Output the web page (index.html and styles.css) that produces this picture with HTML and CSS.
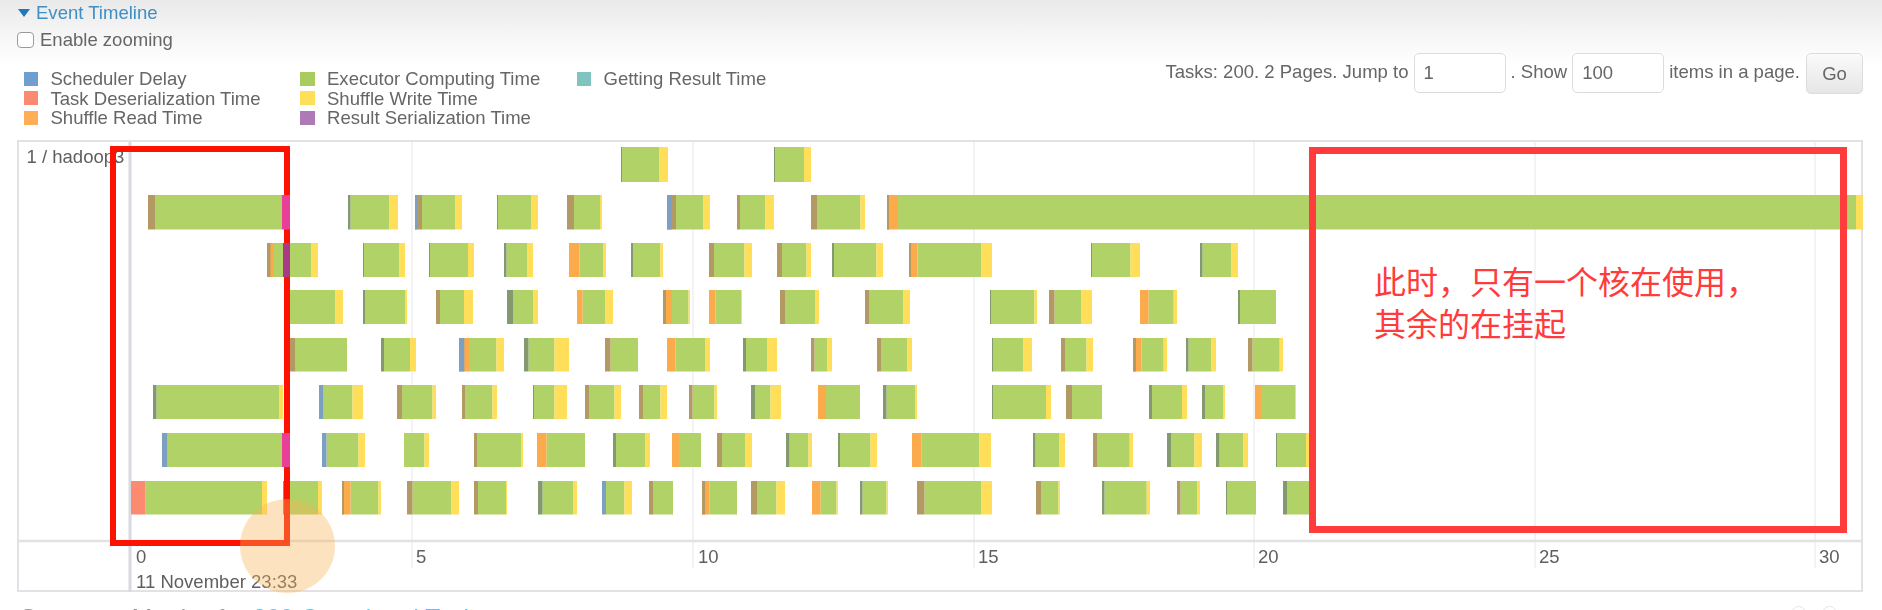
FILE: index.html
```html
<!DOCTYPE html>
<html lang="en">
<head>
<meta charset="utf-8">
<title>Event Timeline</title>
<link rel="stylesheet" href="styles.css">
</head>
<body>
<div class="page">
  <div class="soft">
    <div class="toggle"><span class="arrow"></span><a class="toggle-link">Event Timeline</a></div>
    <label class="zoom-row"><input class="zoom-check" type="checkbox"><span>Enable zooming</span></label>
    <div class="controls">
      <div class="legend">
        <div class="legend-item"><i class="swatch sw-delay"></i>Scheduler Delay</div>
        <div class="legend-item"><i class="swatch sw-deser"></i>Task Deserialization Time</div>
        <div class="legend-item"><i class="swatch sw-read"></i>Shuffle Read Time</div>
        <div class="legend-item"><i class="swatch sw-exec"></i>Executor Computing Time</div>
        <div class="legend-item"><i class="swatch sw-write"></i>Shuffle Write Time</div>
        <div class="legend-item"><i class="swatch sw-ser"></i>Result Serialization Time</div>
        <div class="legend-item"><i class="swatch sw-get"></i>Getting Result Time</div>
      </div>
      <form class="pager">
        <span>Tasks: 200. 2 Pages. Jump to</span>
        <input class="pager-input" type="text" value="1">
        <span>. Show</span>
        <input class="pager-input" type="text" value="100">
        <span>items in a page.</span>
        <button class="go" type="button">Go</button>
      </form>
    </div>
  </div>
  <div class="chart">
    <svg id="timeline" class="timeline" viewBox="19 142 1842 448" width="1842" height="448"></svg>
  </div>
  <div class="foot soft">
    <h4 class="foot-title">Summary Metrics for <a class="foot-link">200 Completed Tasks</a></h4>
    <div class="foot-icons"><i class="dot"></i><i class="dot"></i></div>
  </div>
  <div class="note">此时，只有一个核在使用，<br>其余的在挂起</div>
</div>
<script src="app.js"></script>
</body>
</html>
```
FILE: styles.css
```css
* { box-sizing: border-box; }
html, body { margin: 0; height: 610px; overflow: hidden; background: #fff; }
body { font-family: "Liberation Sans", Arial, sans-serif; font-size: 18.55px; color: #666; }
.page {
  position: relative;
  height: 610px;
  overflow: hidden;
  padding: 0 19px 0 17px;
  background: linear-gradient(#e9e9e9 0, #f6f6f6 35px, #fff 66px);
}
.soft { filter: blur(0.7px); }

.toggle { display: flex; align-items: center; gap: 6px; height: 26px; padding-left: 1px; }
.arrow { width: 0; height: 0; border-left: 6px solid transparent; border-right: 6px solid transparent; border-top: 8px solid #1f78b8; }
.toggle-link { color: #3f8fc4; }
.zoom-row { display: flex; align-items: center; gap: 6px; height: 27px; }
.zoom-check { appearance: none; width: 17px; height: 16px; margin: 0; background: #fff; border: 1.5px solid #9a9a9a; border-radius: 4px; }

.controls { display: flex; justify-content: space-between; height: 87px; }
.legend {
  display: grid;
  grid-auto-flow: column;
  grid-template-rows: repeat(3, 19.6px);
  grid-template-columns: 276.5px 276.5px auto;
  padding: 16px 0 0 6.5px;
}
.legend-item { display: flex; align-items: center; gap: 12.5px; line-height: 19.6px; white-space: nowrap; }
.swatch { width: 14.5px; height: 14px; flex: none; }
.sw-delay { background: #6f9fd0; }
.sw-deser { background: #fb8a70; }
.sw-read { background: #fdae57; }
.sw-exec { background: #a9cc60; }
.sw-write { background: #ffdf59; }
.sw-ser { background: #ae7ab5; }
.sw-get { background: #7fc4bf; }

.pager { display: flex; align-items: flex-start; height: 41px; line-height: 37px; }
.pager span { white-space: nowrap; }
.pager-input {
  width: 92px; height: 40px; margin: 0 5px;
  padding: 0 9px;
  font: inherit; color: #666;
  background: #fff; border: 1.5px solid #dcdcdc; border-radius: 5px;
}
.go {
  width: 57px; height: 41px; margin-left: 6px;
  font: inherit; color: #666;
  background: linear-gradient(#fafafa, #e6e6e6);
  border: 1px solid #dcdcdc; border-radius: 5px;
}

.chart { height: 452px; border: 2px solid #e2e2e6; }
.timeline { display: block; overflow: visible; filter: blur(0.7px); }
.grid { stroke: #efeff3; stroke-width: 1.5; }
.grid-zero { stroke: #d9d9e2; stroke-width: 3; }
.axis { stroke: #e2e2e2; stroke-width: 2.5; }
.label { font-family: "Liberation Sans", Arial, sans-serif; font-size: 18.55px; fill: #5f5f5f; }
.b-green { fill: #b0d267; }
.b-yellow { fill: #ffdf59; }
.b-g { fill: #84996f; }
.b-t { fill: #b39a64; }
.b-o { fill: #fbaa4c; }
.b-b { fill: #7c9fc2; }
.b-s { fill: #fb8a70; }
.b-pink { fill: #ea3f98; }
.b-purple { fill: #a93a86; }
.red-box { fill: none; stroke: #fb1200; stroke-width: 6; }
.glow { fill: #fab45a; fill-opacity: 0.38; }

.foot { display: flex; justify-content: space-between; margin-top: 12px; padding-left: 3px; }
.foot-title { margin: 0; font-size: 24.5px; font-weight: normal; line-height: 28px; color: #999; }
.foot-link { color: #5fc4ee; }
.foot-icons { display: flex; gap: 16px; padding: 2px 26px 0 0; }
.dot { width: 15px; height: 15px; border-radius: 50%; background: #fff; border: 1px solid #e4e4e4; }

.note {
  position: absolute; left: 1309px; top: 147px;
  width: 538px; height: 386px;
  padding: 105px 0 0 58px;
  border: 7px solid #ff3b3b;
  color: #ff3b3b;
  font-family: "Noto Sans CJK SC", "Liberation Sans", sans-serif;
  font-size: 32px; line-height: 42px;
}
```
FILE: app.js
```js
// Each bar: [start, end, lead width, lead colour, tail width, optional first sliver [width, colour]].
// Positions are page pixels.
var rows = [
  { y: 147, h: 35, bars: [
    [621,668,1,'g',9],[774,811,1,'g',7]
  ]},
  { y: 195, h: 34.5, bars: [
    [148,282,7,'t',0],[348,398,2.5,'g',8.5],[415,462,7,'t',6.5,[2,'b']],[497,538,1,'g',7],[567,602,7,'t',2],
    [667,710,9,'t',6.5,[4.5,'b']],[737,774,3,'t',8.5],[811,865,6,'t',4.5],[887,1856,11,'o',0,[2,'t']],[1856,1863,0,'g',7]
  ]},
  { y: 243, h: 34, bars: [
    [267,318,7,'o',6.5,[3.5,'t']],[363,405,1,'g',5.5],[429,474,1,'g',6],[504,533,2.5,'g',6],[569,606,10.5,'o',3],
    [631,663,2,'g',2.7],[709,752,5,'t',7.5],[777,811,5,'t',4.5],[832,883,2,'g',6.5],[909,992,8.5,'o',10.5,[2,'t']],
    [1091,1140,1,'g',9.5],[1200,1238,2.5,'g',6.5]
  ]},
  { y: 290, h: 34, bars: [
    [290,343,0,'g',7.5],[363,407,2,'g',1.5],[436,473,4,'t',9],[507,538,6,'g',5],[577,613,5.5,'o',7.5],
    [663,690,9,'o',1.5,[3,'t']],[709,742,6.5,'o',1],[780,819,5.5,'t',4],[865,910,4.5,'t',6.5],[990,1037,1,'g',2.5],
    [1049,1092,5.5,'t',10.5],[1140,1177,8.5,'o',3.3],[1238,1276,2,'g',0]
  ]},
  { y: 338, h: 33.5, bars: [
    [290,347,5.5,'t',0],[381,416,3,'g',6],[459,504,10,'o',7.5,[5.3,'b']],[524,569,4.5,'g',14.5],[605,638,5.5,'t',0],
    [667,710,8.5,'o',5],[743,777,3,'g',10],[811,832,3.5,'t',4.5],[877,912,4,'t',4.5],[992,1032,1,'g',8.5],
    [1061,1093,4.5,'t',6.5],[1133,1167,8.5,'o',3.3,[3,'t']],[1186,1216,2.5,'g',4.5],[1248,1283,4.5,'t',3.3]
  ]},
  { y: 385, h: 34, bars: [
    [153,283,3.5,'g',4],[319,363,4.5,'b',10.5],[397,436,5,'t',3.5],[462,497,3,'t',4.5],[533,567,1,'g',12.5],
    [585,621,4,'t',6.5],[639,667,4,'t',6.5],[689,717,3.5,'t',2.5],[751,781,4,'g',10.5],[818,860,8,'o',0],
    [883,917,3.5,'g',1.5],[992,1051,1,'g',5],[1066,1102,6,'t',0],[1149,1187,3,'g',5],[1202,1225,3,'g',2],[1255,1296,6,'o',1]
  ]},
  { y: 433, h: 34, bars: [
    [162,282,5.5,'b',0],[322,365,4.5,'b',6.5],[404,429,0,'g',4.5],[474,523,3.5,'t',1.5],[537,585,9.5,'o',0],
    [613,650,3,'g',4.5],[672,701,7,'o',0],[717,752,5,'t',6.5],[786,812,3.5,'g',3.5],[838,877,2,'g',6.5],
    [912,991,9.5,'o',11.5],[1033,1065,2.5,'g',6],[1093,1133,4.5,'t',3.3],[1167,1202,4,'g',7.5],[1216,1248,3.5,'g',4.5],[1276,1312,1,'g',6]
  ]},
  { y: 481, h: 33.5, bars: [
    [131,267,14.5,'s',5],[283,322,7,'g',4],[342,381,8.5,'o',2.5,[2,'t']],[407,459,5.5,'t',7.5],[474,507,4,'t',1],
    [538,577,4.5,'g',3.5],[602,632,4,'b',7.5],[649,673,4.5,'t',0],[702,737,7.5,'o',0,[3,'t']],[751,785,6.5,'t',8.5],
    [812,838,8.5,'o',1.5],[860,888,2.5,'g',1.5],[917,992,7.5,'t',10.5],[1036,1060,5,'t',1.5],[1102,1150,2.5,'g',3.3],
    [1177,1200,3.5,'t',2.5],[1226,1256,1,'g',0],[1283,1312,4,'g',0]
  ]}
];

var svg = document.getElementById('timeline');
var NS = 'http://www.w3.org/2000/svg';

function add(tag, attrs, text) {
  var el = document.createElementNS(NS, tag);
  for (var k in attrs) el.setAttribute(k, attrs[k]);
  if (text) el.textContent = text;
  svg.appendChild(el);
  return el;
}
function rect(x, y, w, h, cls) {
  add('rect', { x: x, y: y, width: w, height: h, 'class': cls });
}

[412, 693, 974, 1254, 1535, 1815].forEach(function (x) {
  add('line', { x1: x, x2: x, y1: 142, y2: 568, 'class': 'grid' });
});
add('line', { x1: 130, x2: 130, y1: 142, y2: 592, 'class': 'grid-zero' });
add('line', { x1: 17, x2: 1863, y1: 541, y2: 541, 'class': 'axis' });

var ticks = [[136,'0'],[416,'5'],[698,'10'],[978,'15'],[1258,'20'],[1539,'25'],[1819,'30']];
ticks.forEach(function (t) {
  add('text', { x: t[0], y: 562.5, 'class': 'label' }, t[1]);
});
add('text', { x: 136, y: 587.5, 'class': 'label' }, '11 November 23:33');
add('text', { x: 26.5, y: 162.5, 'class': 'label' }, '1 / hadoop3');

rows.forEach(function (row) {
  row.bars.forEach(function (b) {
    var lead = b[2], tail = b[4];
    rect(b[0] + lead, row.y, b[1] - b[0] - lead - tail, row.h, 'b-green');
    if (lead) rect(b[0], row.y, lead, row.h, 'b-' + b[3]);
    if (tail) rect(b[1] - tail, row.y, tail, row.h, 'b-yellow');
    if (b[5] && b[5][0]) rect(b[0], row.y, b[5][0], row.h, 'b-' + b[5][1]);
  });
});

add('rect', { x: 113, y: 149, width: 174, height: 394, 'class': 'red-box' });
rect(282, 195, 8, 34.5, 'b-pink');
rect(282, 433, 8, 34, 'b-pink');
rect(283, 243, 7, 34, 'b-purple');

add('ellipse', { cx: 287.5, cy: 546, rx: 47.5, ry: 47, 'class': 'glow' });
```
